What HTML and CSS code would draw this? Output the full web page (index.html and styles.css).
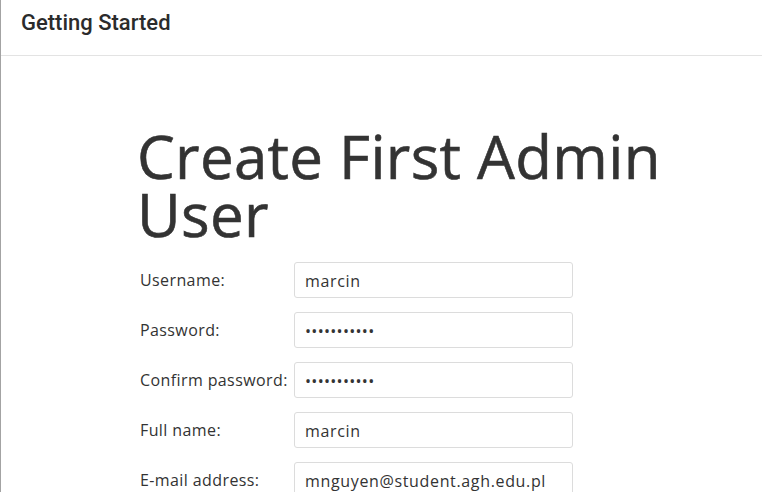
FILE: index.html
```html
<!DOCTYPE html>
<html lang="en">
<head>
<meta charset="utf-8">
<title>Getting Started</title>
<link rel="stylesheet" href="styles.css">
</head>
<body>
<div class="frame">
  <header class="top">
    <h2 class="top-title">Getting Started</h2>
  </header>
  <main class="content">
    <h1 class="title">Create First Admin User</h1>
    <form class="form">
      <label class="lbl" for="u">Username:</label>
      <input class="fld" id="u" type="text" value="marcin">
      <label class="lbl" for="p">Password:</label>
      <input class="fld pw" id="p" type="password" value="marcinpass1">
      <label class="lbl" for="c">Confirm password:</label>
      <input class="fld pw" id="c" type="password" value="marcinpass1">
      <label class="lbl" for="f">Full name:</label>
      <input class="fld" id="f" type="text" value="marcin">
      <label class="lbl" for="e">E-mail address:</label>
      <input class="fld" id="e" type="text" value="mnguyen@student.agh.edu.pl">
    </form>
  </main>
</div>
</body>
</html>
```
FILE: styles.css
```css
html, body {
  margin: 0;
  padding: 0;
  height: 100%;
  background: #ffffff;
  overflow: hidden;
}
.frame {
  height: 100%;
  border-left: 1px solid #a3a3a3;
  box-sizing: border-box;
  color: #333333;
  font-family: "Open Sans", "Noto Sans", sans-serif;
}
.top {
  height: 45px;
  border-bottom: 1px solid #e3e3e3;
  padding: 10px 0 0 20px;
}
.top-title {
  margin: 0;
  font-family: Roboto, "Liberation Sans", sans-serif;
  font-weight: 500;
  font-size: 22px;
  line-height: normal;
  color: #2b2b2b;
}
.content {
  padding-left: 136px;
}
.title {
  max-width: 580px;
  margin: 71px 0 19px 0;
  font-weight: 400;
  font-size: 60px;
  line-height: 58px;
  color: #333333;
  letter-spacing: 0.3px;
  -webkit-text-stroke: 0.6px #333333;
}
.form {
  display: grid;
  grid-template-columns: 154px 279px;
  row-gap: 14px;
  margin-left: 3px;
  align-items: center;
}
.lbl {
  font-size: 16px;
  letter-spacing: 0.4px;
  color: #333333;
  padding-bottom: 1px;
}
.fld {
  box-sizing: border-box;
  width: 279px;
  height: 36px;
  border: 1px solid #dcdcdc;
  border-radius: 3px;
  padding: 2px 10px 0 10px;
  font-family: "Open Sans", "Noto Sans", sans-serif;
  font-size: 16px;
  letter-spacing: 0.65px;
  color: #333333;
  background: #ffffff;
  outline: none;
}
.pw {
  letter-spacing: 0.3px;
  font-size: 16px;
}
```
